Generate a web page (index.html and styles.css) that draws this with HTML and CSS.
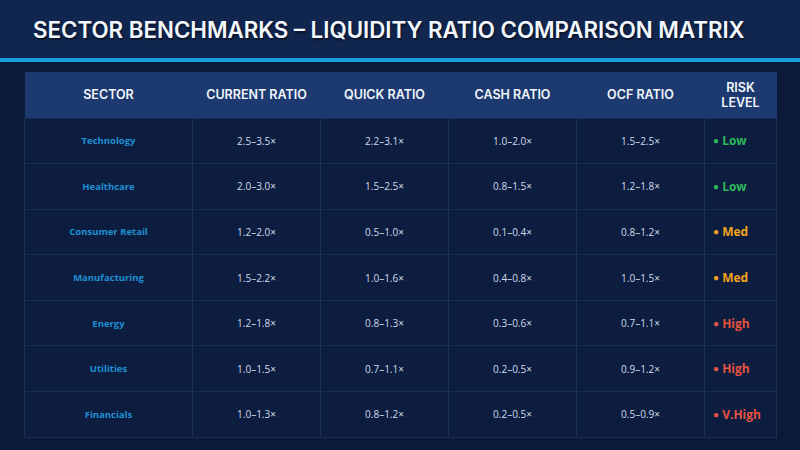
FILE: index.html
```html
<!DOCTYPE html>
<html>
<head>
<meta charset="utf-8">
<link rel="stylesheet" href="styles.css">
</head>
<body>
<div class="page">
  <header class="title-band">
    <h1 class="title">SECTOR BENCHMARKS – LIQUIDITY RATIO COMPARISON MATRIX</h1>
  </header>
  <div class="accent"></div>
  <main class="content">
    <table class="matrix">
      <colgroup>
        <col class="c-sector"><col class="c-num"><col class="c-num"><col class="c-num"><col class="c-num"><col class="c-risk">
      </colgroup>
      <thead>
        <tr>
          <th>SECTOR</th><th>CURRENT RATIO</th><th>QUICK RATIO</th><th>CASH RATIO</th><th>OCF RATIO</th><th>RISK<br>LEVEL</th>
        </tr>
      </thead>
      <tbody>
        <tr><td class="sector">Technology</td><td>2.5–3.5×</td><td>2.2–3.1×</td><td>1.0–2.0×</td><td>1.5–2.5×</td><td class="risk low"><span class="dot">●</span> Low</td></tr>
        <tr><td class="sector">Healthcare</td><td>2.0–3.0×</td><td>1.5–2.5×</td><td>0.8–1.5×</td><td>1.2–1.8×</td><td class="risk low"><span class="dot">●</span> Low</td></tr>
        <tr><td class="sector">Consumer Retail</td><td>1.2–2.0×</td><td>0.5–1.0×</td><td>0.1–0.4×</td><td>0.8–1.2×</td><td class="risk med"><span class="dot">●</span> Med</td></tr>
        <tr><td class="sector">Manufacturing</td><td>1.5–2.2×</td><td>1.0–1.6×</td><td>0.4–0.8×</td><td>1.0–1.5×</td><td class="risk med"><span class="dot">●</span> Med</td></tr>
        <tr><td class="sector">Energy</td><td>1.2–1.8×</td><td>0.8–1.3×</td><td>0.3–0.6×</td><td>0.7–1.1×</td><td class="risk high"><span class="dot">●</span> High</td></tr>
        <tr><td class="sector">Utilities</td><td>1.0–1.5×</td><td>0.7–1.1×</td><td>0.2–0.5×</td><td>0.9–1.2×</td><td class="risk high"><span class="dot">●</span> High</td></tr>
        <tr><td class="sector">Financials</td><td>1.0–1.3×</td><td>0.8–1.2×</td><td>0.2–0.5×</td><td>0.5–0.9×</td><td class="risk high"><span class="dot">●</span> V.High</td></tr>
      </tbody>
    </table>
  </main>
</div>
</body>
</html>
```
FILE: styles.css
```css
html, body {
  margin: 0;
  padding: 0;
  background: #0b1a38;
}
.page {
  width: 800px;
  height: 450px;
  overflow: hidden;
  background: #0b1a38;
  font-family: "Open Sans", "Noto Sans", sans-serif;
}
.title-band {
  height: 58px;
  background: #11264f;
  display: flex;
  align-items: center;
  padding-left: 33px;
  box-sizing: border-box;
}
.title {
  margin: 0;
  font-family: Inter, "Open Sans", sans-serif;
  font-weight: 600;
  font-size: 22.3px;
  letter-spacing: 0px;
  color: #f4f7fc;
  text-shadow: 1px 2px 2px rgba(0,0,0,0.5);
  white-space: nowrap;
}
.accent {
  height: 4px;
  background: #1a9ee0;
}
.content {
  padding: 10px 24px 0 24px;
}
.matrix {
  width: 752px;
  border-collapse: collapse;
  table-layout: fixed;
  background: #0c1d40;
}
.c-sector { width: 168px; }
.c-num { width: 128px; }
.c-risk { width: 72px; }
.matrix thead tr {
  background: #1c3a70;
  height: 46px;
}
.matrix th {
  font-family: Inter, "Open Sans", sans-serif;
  font-weight: 600;
  font-size: 12.5px;
  line-height: 15px;
  color: #f2f5fa;
  text-align: center;
  padding: 0;
}
.matrix tbody tr {
  height: 45.6px;
}
.matrix td {
  border: 1px solid #1a2d55;
  text-align: center;
  padding: 0;
  font-size: 10px;
  color: #d3dbea;
}
.matrix td.sector {
  color: #1f90d2;
  font-weight: 700;
  font-size: 9.5px;
}
.matrix td.risk {
  text-align: left;
  padding-left: 8px;
  font-weight: 700;
  font-size: 12px;
}
.dot {
  font-size: 10px;
  vertical-align: 1px;
}
.matrix td.low { color: #2eb85c; }
.matrix td.med { color: #f5a31a; }
.matrix td.high { color: #e5533f; }
```
